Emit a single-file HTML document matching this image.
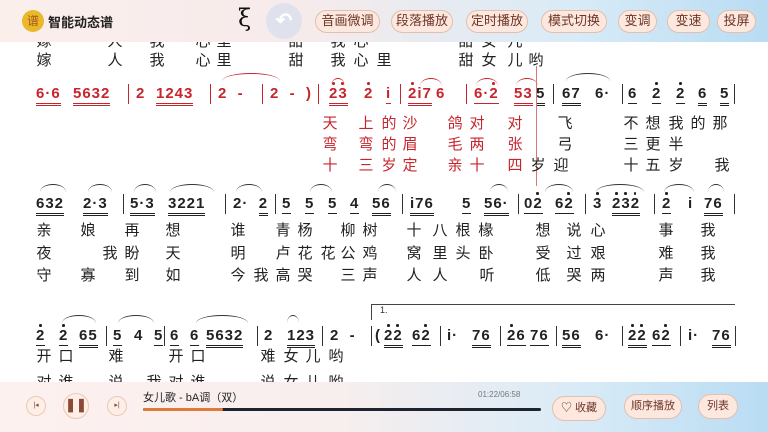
<!DOCTYPE html>
<html><head><meta charset="utf-8"><style>
*{margin:0;padding:0;box-sizing:border-box}
body{width:768px;height:432px;overflow:hidden;background:#fff;position:relative;font-family:"Liberation Sans","Noto Sans CJK SC",sans-serif}
.l{position:absolute;font-size:15px;line-height:16px;color:#222;width:16px;text-align:center}
.r{color:#c8242c}
.n{position:absolute;font-size:15px;font-weight:bold;line-height:16px;color:#222;letter-spacing:1px;font-family:"Liberation Sans",sans-serif;white-space:pre}
.n.r{color:#c8242c}
.u1{border-bottom:1px solid currentColor;padding-bottom:1px}
.u2{border-bottom:3px double currentColor;padding-bottom:1px}
.d{position:relative;font-style:normal}
.d::after{content:"";position:absolute;left:3px;top:-3px;width:2.5px;height:2.5px;border-radius:50%;background:currentColor}
.b{position:absolute;width:1.3px;height:20px;background:#333}
.b.r{background:#c8242c}
.s{position:absolute;border-top:1.3px solid #333;border-radius:50%/100% 100% 0 0;height:8px}
.s.r{border-color:#c8242c}
.hd{position:absolute;left:0;top:0;width:768px;height:42px;background:linear-gradient(90deg,#fbefec 0%,#f6ebeb 40%,#d8ebf7 75%,#b9dcf3 100%)}
.pill{position:absolute;top:10px;height:23px;border:1.5px solid #e3bfae;border-radius:12px;background:#fce8de;color:#6e3526;font-size:13px;line-height:20px;text-align:center}
.ft{position:absolute;left:0;top:382px;width:768px;height:50px;background:linear-gradient(90deg,#fdf1ef 0%,#f7eeee 45%,#d9ebf7 75%,#b9dcf3 100%)}
.circ{position:absolute;border-radius:50%;border:1.5px solid #edc8b8;background:#fdeee6;color:#8a4a38;text-align:center}
</style></head><body>

<div class="l" style="left:36px;top:34px">嫁</div><div class="l" style="left:107px;top:34px">人</div><div class="l" style="left:149px;top:34px">我</div><div class="l" style="left:195px;top:34px">心</div><div class="l" style="left:216px;top:34px">里</div><div class="l" style="left:288px;top:34px">甜</div><div class="l" style="left:330px;top:34px">我</div><div class="l" style="left:353px;top:34px">心</div><div class="l" style="left:458px;top:34px">甜</div><div class="l" style="left:481px;top:34px">女</div><div class="l" style="left:507px;top:34px">儿</div>

<div class="hd"></div>
<div style="position:absolute;left:22px;top:10px;width:22px;height:22px;border-radius:50%;background:#e8b92a;color:#a8561c;font-size:12px;line-height:22px;text-align:center">谱</div>
<div style="position:absolute;left:48px;top:12px;font-size:13px;font-weight:bold;color:#222">智能动态谱</div>
<div style="position:absolute;left:238px;top:4px;font-size:24px;color:#111;font-family:'DejaVu Serif',serif">ξ</div>
<div style="position:absolute;left:266px;top:3px;width:36px;height:36px;border-radius:50%;background:#dfe2ec;color:#fff;font-size:20px;line-height:36px;text-align:center;font-weight:bold">↶</div>
<div class="pill" style="left:315px;width:65px">音画微调</div>
<div class="pill" style="left:391px;width:62px">段落播放</div>
<div class="pill" style="left:466px;width:62px">定时播放</div>
<div class="pill" style="left:541px;width:66px">模式切换</div>
<div class="pill" style="left:618px;width:39px">变调</div>
<div class="pill" style="left:667px;width:43px">变速</div>
<div class="pill" style="left:717px;width:39px">投屏</div>

<div class="l" style="left:36px;top:53px">嫁</div><div class="l" style="left:107px;top:53px">人</div><div class="l" style="left:149px;top:53px">我</div><div class="l" style="left:195px;top:53px">心</div><div class="l" style="left:216px;top:53px">里</div><div class="l" style="left:288px;top:53px">甜</div><div class="l" style="left:330px;top:53px">我</div><div class="l" style="left:353px;top:53px">心</div><div class="l" style="left:376px;top:53px">里</div><div class="l" style="left:458px;top:53px">甜</div><div class="l" style="left:481px;top:53px">女</div><div class="l" style="left:507px;top:53px">儿</div><div class="l" style="left:528px;top:53px">哟</div>

<!-- row 1 notes -->
<span class="n r u2" style="left:36px;top:86px">6·6</span>
<span class="n r u2" style="left:73px;top:86px">5632</span>
<div class="b r" style="left:128px;top:84px"></div>
<span class="n r" style="left:136px;top:86px">2</span>
<span class="n r u2" style="left:156px;top:86px">1243</span>
<div class="b r" style="left:210px;top:84px"></div>
<span class="n r" style="left:218px;top:86px">2  -</span>
<div class="b r" style="left:262px;top:84px"></div>
<span class="n r" style="left:270px;top:86px">2  -  )</span>
<div class="s r" style="left:222px;top:73px;width:58px"></div>
<div class="b r" style="left:318px;top:84px"></div>
<span class="n r u2" style="left:329px;top:86px"><i class="d">2</i><i class="d">3</i></span>
<div class="s r" style="left:331px;top:78px;width:14px"></div>
<span class="n r" style="left:364px;top:86px"><i class="d">2</i></span>
<span class="n r u1" style="left:386px;top:86px">i</span>
<div class="b r" style="left:400px;top:84px"></div>
<span class="n r u2" style="left:408px;top:86px"><i class="d">2</i>i7</span><span class="n r" style="left:436px;top:86px">6</span>
<div class="s r" style="left:420px;top:78px;width:22px"></div>
<div class="b r" style="left:466px;top:84px"></div>
<span class="n r u1" style="left:474px;top:86px">6·<i class="d">2</i></span>
<div class="s r" style="left:476px;top:78px;width:22px"></div>
<span class="n r u2" style="left:514px;top:86px">53</span><span class="n u2" style="left:536px;top:86px">5</span>
<div class="s r" style="left:516px;top:78px;width:22px"></div>
<div style="position:absolute;left:536px;top:66px;width:1px;height:120px;background:#d87878"></div>
<div class="b" style="left:553px;top:84px"></div>
<span class="n u2" style="left:562px;top:86px">67</span><span class="n" style="left:595px;top:86px">6·</span>
<div class="s" style="left:566px;top:73px;width:44px"></div>
<div class="b" style="left:622px;top:84px"></div>
<span class="n u1" style="left:628px;top:86px">6</span><span class="n u1" style="left:652px;top:86px"><i class="d">2</i></span><span class="n u1" style="left:676px;top:86px"><i class="d">2</i></span><span class="n u2" style="left:698px;top:86px">6</span><span class="n u2" style="left:720px;top:86px">5</span>
<div class="b" style="left:734px;top:84px"></div>

<div class="l r" style="left:322px;top:116px">天</div><div class="l r" style="left:358px;top:116px">上</div><div class="l r" style="left:381px;top:116px">的</div><div class="l r" style="left:402px;top:116px">沙</div><div class="l r" style="left:447px;top:116px">鸽</div><div class="l r" style="left:469px;top:116px">对</div><div class="l r" style="left:507px;top:116px">对</div><div class="l" style="left:557px;top:116px">飞</div><div class="l" style="left:623px;top:116px">不</div><div class="l" style="left:645px;top:116px">想</div><div class="l" style="left:668px;top:116px">我</div><div class="l" style="left:690px;top:116px">的</div><div class="l" style="left:712px;top:116px">那</div>
<div class="l r" style="left:322px;top:137px">弯</div><div class="l r" style="left:358px;top:137px">弯</div><div class="l r" style="left:381px;top:137px">的</div><div class="l r" style="left:402px;top:137px">眉</div><div class="l r" style="left:447px;top:137px">毛</div><div class="l r" style="left:469px;top:137px">两</div><div class="l r" style="left:507px;top:137px">张</div><div class="l" style="left:557px;top:137px">弓</div><div class="l" style="left:623px;top:137px">三</div><div class="l" style="left:645px;top:137px">更</div><div class="l" style="left:668px;top:137px">半</div>
<div class="l r" style="left:322px;top:158px">十</div><div class="l r" style="left:358px;top:158px">三</div><div class="l r" style="left:381px;top:158px">岁</div><div class="l r" style="left:402px;top:158px">定</div><div class="l r" style="left:447px;top:158px">亲</div><div class="l r" style="left:469px;top:158px">十</div><div class="l r" style="left:507px;top:158px">四</div><div class="l" style="left:530px;top:158px">岁</div><div class="l" style="left:553px;top:158px">迎</div><div class="l" style="left:623px;top:158px">十</div><div class="l" style="left:645px;top:158px">五</div><div class="l" style="left:668px;top:158px">岁</div><div class="l" style="left:714px;top:158px">我</div>

<!-- row 2 notes -->
<span class="n u2" style="left:36px;top:196px">632</span><span class="n u2" style="left:83px;top:196px">2·3</span>
<div class="b" style="left:123px;top:194px"></div>
<span class="n u2" style="left:130px;top:196px">5·3</span><span class="n u2" style="left:168px;top:196px">3221</span>
<div class="b" style="left:225px;top:194px"></div>
<span class="n" style="left:233px;top:196px">2·  <span class="u2">2</span></span>
<div class="b" style="left:275px;top:194px"></div>
<span class="n u1" style="left:282px;top:196px">5</span><span class="n u1" style="left:305px;top:196px">5</span><span class="n u1" style="left:328px;top:196px">5</span>
<span class="n u1" style="left:350px;top:196px">4</span><span class="n u2" style="left:372px;top:196px">56</span>
<div class="b" style="left:402px;top:194px"></div>
<span class="n u2" style="left:410px;top:196px">i76</span><span class="n u1" style="left:462px;top:196px">5</span><span class="n u2" style="left:484px;top:196px">56·</span>
<div class="b" style="left:518px;top:194px"></div>
<span class="n u1" style="left:524px;top:196px">0<i class="d">2</i></span><span class="n u1" style="left:555px;top:196px">6<i class="d">2</i></span>
<div class="b" style="left:585px;top:194px"></div>
<span class="n" style="left:593px;top:196px"><i class="d">3</i></span><span class="n u2" style="left:612px;top:196px"><i class="d">2</i><i class="d">3</i><i class="d">2</i></span>
<div class="b" style="left:654px;top:194px"></div>
<span class="n u1" style="left:662px;top:196px"><i class="d">2</i></span><span class="n" style="left:688px;top:196px">i</span><span class="n u2" style="left:704px;top:196px">76</span>
<div class="b" style="left:734px;top:194px"></div>
<div class="s" style="left:40px;top:184px;width:26px"></div><div class="s" style="left:88px;top:184px;width:24px"></div><div class="s" style="left:134px;top:184px;width:22px"></div><div class="s" style="left:170px;top:184px;width:44px"></div><div class="s" style="left:236px;top:184px;width:26px"></div><div class="s" style="left:310px;top:184px;width:22px"></div><div class="s" style="left:378px;top:184px;width:18px"></div><div class="s" style="left:490px;top:184px;width:18px"></div><div class="s" style="left:545px;top:184px;width:28px"></div><div class="s" style="left:596px;top:184px;width:48px"></div><div class="s" style="left:664px;top:184px;width:30px"></div><div class="s" style="left:708px;top:184px;width:16px"></div>

<div class="l" style="left:36px;top:223px">亲</div><div class="l" style="left:80px;top:223px">娘</div><div class="l" style="left:124px;top:223px">再</div><div class="l" style="left:165px;top:223px">想</div><div class="l" style="left:230px;top:223px">谁</div><div class="l" style="left:275px;top:223px">青</div><div class="l" style="left:297px;top:223px">杨</div><div class="l" style="left:340px;top:223px">柳</div><div class="l" style="left:362px;top:223px">树</div><div class="l" style="left:406px;top:223px">十</div><div class="l" style="left:432px;top:223px">八</div><div class="l" style="left:455px;top:223px">根</div><div class="l" style="left:478px;top:223px">椽</div><div class="l" style="left:535px;top:223px">想</div><div class="l" style="left:566px;top:223px">说</div><div class="l" style="left:590px;top:223px">心</div><div class="l" style="left:658px;top:223px">事</div><div class="l" style="left:700px;top:223px">我</div>
<div class="l" style="left:36px;top:246px">夜</div><div class="l" style="left:102px;top:246px">我</div><div class="l" style="left:124px;top:246px">盼</div><div class="l" style="left:165px;top:246px">天</div><div class="l" style="left:230px;top:246px">明</div><div class="l" style="left:275px;top:246px">卢</div><div class="l" style="left:297px;top:246px">花</div><div class="l" style="left:320px;top:246px">花</div><div class="l" style="left:340px;top:246px">公</div><div class="l" style="left:362px;top:246px">鸡</div><div class="l" style="left:406px;top:246px">窝</div><div class="l" style="left:432px;top:246px">里</div><div class="l" style="left:455px;top:246px">头</div><div class="l" style="left:478px;top:246px">卧</div><div class="l" style="left:535px;top:246px">受</div><div class="l" style="left:566px;top:246px">过</div><div class="l" style="left:590px;top:246px">艰</div><div class="l" style="left:658px;top:246px">难</div><div class="l" style="left:700px;top:246px">我</div>
<div class="l" style="left:36px;top:268px">守</div><div class="l" style="left:80px;top:268px">寡</div><div class="l" style="left:124px;top:268px">到</div><div class="l" style="left:165px;top:268px">如</div><div class="l" style="left:230px;top:268px">今</div><div class="l" style="left:253px;top:268px">我</div><div class="l" style="left:275px;top:268px">高</div><div class="l" style="left:297px;top:268px">哭</div><div class="l" style="left:340px;top:268px">三</div><div class="l" style="left:362px;top:268px">声</div><div class="l" style="left:406px;top:268px">人</div><div class="l" style="left:432px;top:268px">人</div><div class="l" style="left:479px;top:268px">听</div><div class="l" style="left:535px;top:268px">低</div><div class="l" style="left:566px;top:268px">哭</div><div class="l" style="left:590px;top:268px">两</div><div class="l" style="left:658px;top:268px">声</div><div class="l" style="left:700px;top:268px">我</div>

<div style="position:absolute;left:371px;top:304px;width:364px;height:16px;border-top:1px solid #444;border-left:1px solid #444"></div>
<div style="position:absolute;left:380px;top:305px;font-size:9px;color:#333">1.</div>

<!-- row 3 notes -->
<span class="n u1" style="left:36px;top:328px"><i class="d">2</i></span><span class="n u1" style="left:59px;top:328px"><i class="d">2</i></span><span class="n u2" style="left:79px;top:328px">65</span>
<div class="b" style="left:106px;top:326px"></div>
<span class="n u1" style="left:113px;top:328px">5</span><span class="n" style="left:134px;top:328px">4</span><span class="n u1" style="left:154px;top:328px">5</span>
<div class="b" style="left:164px;top:326px"></div>
<span class="n u1" style="left:170px;top:328px">6</span><span class="n u1" style="left:190px;top:328px">6</span><span class="n u2" style="left:206px;top:328px">5632</span>
<div class="b" style="left:257px;top:326px"></div>
<span class="n" style="left:264px;top:328px">2</span><span class="n u2" style="left:287px;top:328px">123</span>
<div class="b" style="left:322px;top:326px"></div>
<span class="n" style="left:330px;top:328px">2  -</span>
<div class="b" style="left:371px;top:326px"></div>
<span class="n" style="left:375px;top:328px">(</span><span class="n u2" style="left:384px;top:328px"><i class="d">2</i><i class="d">2</i></span><span class="n u1" style="left:412px;top:328px">6<i class="d">2</i></span>
<div class="b" style="left:440px;top:326px"></div>
<span class="n" style="left:447px;top:328px">i·</span><span class="n u2" style="left:472px;top:328px">76</span>
<div class="b" style="left:500px;top:326px"></div>
<span class="n u1" style="left:507px;top:328px"><i class="d">2</i>6</span><span class="n u1" style="left:530px;top:328px">76</span>
<div class="b" style="left:556px;top:326px"></div>
<span class="n u2" style="left:562px;top:328px">56</span><span class="n" style="left:595px;top:328px">6·</span>
<div class="b" style="left:622px;top:326px"></div>
<span class="n u2" style="left:628px;top:328px"><i class="d">2</i><i class="d">2</i></span><span class="n u1" style="left:652px;top:328px">6<i class="d">2</i></span>
<div class="b" style="left:680px;top:326px"></div>
<span class="n" style="left:688px;top:328px">i·</span><span class="n u2" style="left:712px;top:328px">76</span>
<div class="b" style="left:735px;top:326px"></div>
<div class="s" style="left:62px;top:315px;width:34px"></div><div class="s" style="left:118px;top:315px;width:36px"></div><div class="s" style="left:196px;top:315px;width:52px"></div><div class="s" style="left:287px;top:315px;width:12px"></div>

<div class="l" style="left:36px;top:349px">开</div><div class="l" style="left:58px;top:349px">口</div><div class="l" style="left:108px;top:349px">难</div><div class="l" style="left:168px;top:349px">开</div><div class="l" style="left:190px;top:349px">口</div><div class="l" style="left:260px;top:349px">难</div><div class="l" style="left:283px;top:349px">女</div><div class="l" style="left:305px;top:349px">儿</div><div class="l" style="left:328px;top:349px">哟</div>
<div class="l" style="left:36px;top:375px">对</div><div class="l" style="left:58px;top:375px">谁</div><div class="l" style="left:108px;top:375px">说</div><div class="l" style="left:146px;top:375px">我</div><div class="l" style="left:168px;top:375px">对</div><div class="l" style="left:190px;top:375px">谁</div><div class="l" style="left:260px;top:375px">说</div><div class="l" style="left:283px;top:375px">女</div><div class="l" style="left:305px;top:375px">儿</div><div class="l" style="left:328px;top:375px">哟</div>

<div class="ft"></div>
<div class="circ" style="left:26px;top:396px;width:20px;height:20px;font-size:7px;line-height:17px">|◂</div>
<div class="circ" style="left:63px;top:393px;width:26px;height:26px;font-size:13px;line-height:22px;font-weight:bold">❚❚</div>
<div class="circ" style="left:107px;top:396px;width:20px;height:20px;font-size:7px;line-height:17px">▸|</div>
<div style="position:absolute;left:143px;top:389px;font-size:11px;color:#222">女儿歌 - bA调（双）</div>
<div style="position:absolute;left:478px;top:390px;font-size:8px;color:#777">01:22/06:58</div>
<div style="position:absolute;left:143px;top:408px;width:398px;height:3px;border-radius:2px;background:#1d2430"></div>
<div style="position:absolute;left:143px;top:408px;width:80px;height:3px;border-radius:2px;background:#e07a3a"></div>
<div class="pill" style="left:552px;top:396px;width:54px;height:25px;font-size:11px;line-height:22px;border-radius:13px">♡ 收藏</div>
<div class="pill" style="left:624px;top:394px;width:58px;height:25px;font-size:11px;line-height:22px;border-radius:13px">顺序播放</div>
<div class="pill" style="left:698px;top:394px;width:40px;height:25px;font-size:11px;line-height:22px;border-radius:13px">列表</div>
</body></html>
